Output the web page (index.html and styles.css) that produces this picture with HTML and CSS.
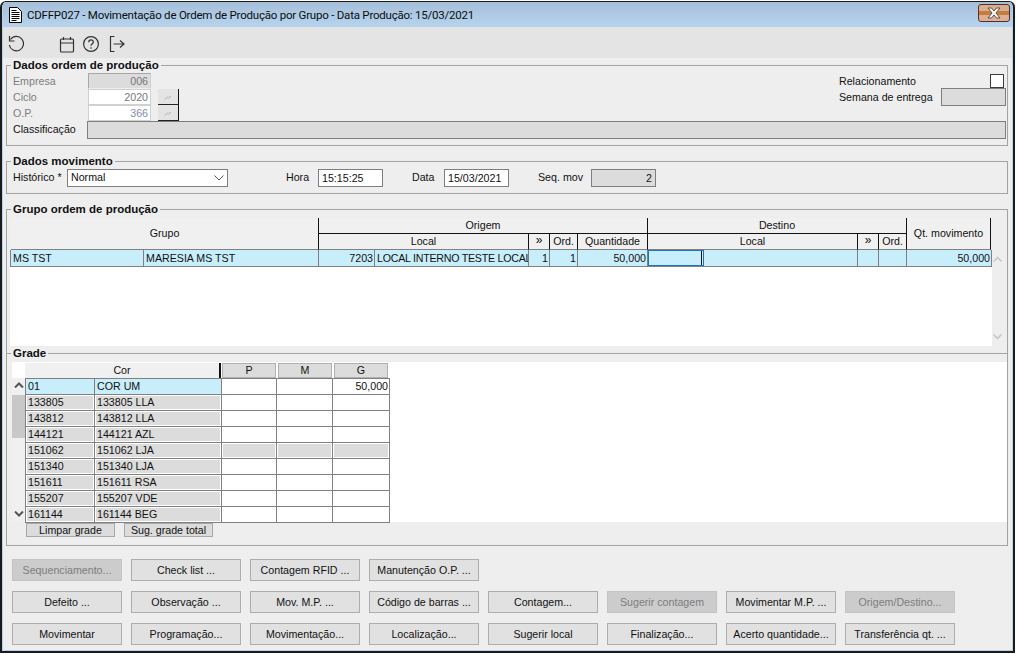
FILE: index.html
```html
<!DOCTYPE html>
<html lang="pt-BR">
<head>
<meta charset="utf-8">
<title>CDFFP027</title>
<link rel="stylesheet" href="styles.css">
</head>
<body>
<div class="window">
  <header class="titlebar">
    <svg class="doc-icon" width="15" height="16" viewBox="0 0 15 16"><path d="M1.500.5h8l4 4v11h-12z" fill="#fff" stroke="#000"/><path d="M3.500 3.500h5M3.500 5.500h8M3.500 7.500h8M3.500 9.500h8M3.500 11.500h8M3.500 13.500h5" stroke="#000"/></svg>
    <span class="title">CDFFP027 - Movimentação de Ordem de Produção por Grupo - Data Produção: 15/03/2021</span>
    <div class="close"><svg width="16" height="12" viewBox="0 0 16 12"><path d="M2 1h3.500L8 4l2.500-3H14L10 6l4 5h-3.500L8 8l-2.500 3H2l4-5z" fill="#f4f4f4" stroke="#5e5048"/></svg></div>
  </header>
  <nav class="toolbar">
    <svg class="tool undo" width="20" height="20" viewBox="0 0 20 20" fill="none" stroke="#333" stroke-width="1.200"><path d="M4.500 5.500A7.200 7.200 0 1 1 3.300 11"/><path d="M3.500 2v5h5"/></svg>
    <svg class="tool cal" width="16" height="18" viewBox="0 0 16 18" fill="none" stroke="#333" stroke-width="1.200"><rect x="1.500" y="4" width="13" height="13" rx="1"/><path d="M1.500 8h13M4.500 2v3M11.500 2v3"/></svg>
    <svg class="tool help" width="18" height="18" viewBox="0 0 18 18" fill="none" stroke="#333" stroke-width="1.200"><circle cx="9" cy="9" r="7.400"/><path d="M6.700 7.200c0-3 4.700-3 4.700-.2 0 1.800-2.400 1.800-2.400 3.700"/><path d="M9 12.300v1.400"/></svg>
    <svg class="tool exit" width="18" height="18" viewBox="0 0 18 18" fill="none" stroke="#333" stroke-width="1.200"><path d="M6.500 1.500h-4v15h4M5.500 9h10.500M12 5.500 16 9l-4 3.500"/></svg>
  </nav>
  <main class="content">
    <fieldset class="group">
      <legend>Dados ordem de produção</legend>
      <div class="op-top">
        <div class="op-left">
          <div class="frow"><span class="flabel off">Empresa</span><div class="cell-in locked">006</div></div>
          <div class="frow"><span class="flabel off">Ciclo</span><div class="cell-in">2020</div><div class="lookup"><svg width="10" height="8" viewBox="0 0 10 8"><path d="M2 6.500l3-3M5.500 5.500 8 3" stroke="#aaa"/></svg></div></div>
          <div class="frow"><span class="flabel off">O.P.</span><div class="cell-in blue">366</div><div class="lookup"><svg width="10" height="8" viewBox="0 0 10 8"><path d="M2 6.500l3-3M5.500 5.500 8 3" stroke="#aaa"/></svg></div></div>
        </div>
        <div class="op-right">
          <div class="rrow first"><span>Relacionamento</span><span class="check"></span></div>
          <div class="rrow"><span>Semana de entrega</span><div class="box-gray wide"></div></div>
        </div>
      </div>
      <div class="class-row"><span class="flabel">Classificação</span><div class="box-gray fill"></div></div>
    </fieldset>

    <fieldset class="group move">
      <legend>Dados movimento</legend>
      <div class="move-row">
        <span class="m-hist">Histórico *</span>
        <div class="box select"><span>Normal</span><svg width="10" height="6" viewBox="0 0 10 6" fill="none" stroke="#555"><path d="M.5.500 5 5l4.500-4.500"/></svg></div>
        <span class="m-hora">Hora</span><div class="box time">15:15:25</div>
        <span class="m-data">Data</span><div class="box time">15/03/2021</div>
        <span class="m-seq">Seq. mov</span><div class="box-gray seq">2</div>
      </div>
    </fieldset>

    <fieldset class="group grp">
      <legend>Grupo ordem de produção</legend>
      <div class="grid-wrap">
        <div class="grid-main">
          <div class="ghead">
            <div class="gh g-grupo">Grupo</div>
            <div class="gh g-origem">Origem</div>
            <div class="gh g-destino">Destino</div>
            <div class="gh g-qt">Qt. movimento</div>
            <div class="gh low">Local</div>
            <div class="gh low chev">»</div>
            <div class="gh low">Ord.</div>
            <div class="gh low">Quantidade</div>
            <div class="gh low">Local</div>
            <div class="gh low chev">»</div>
            <div class="gh low">Ord.</div>
          </div>
          <div class="grow">
            <div class="gc">MS TST</div>
            <div class="gc">MARESIA MS TST</div>
            <div class="gc right">7203</div>
            <div class="gc tight">LOCAL INTERNO TESTE LOCAL</div>
            <div class="gc right">1</div>
            <div class="gc right">1</div>
            <div class="gc right">50,000</div>
            <div class="gc focus"></div>
            <div class="gc"></div>
            <div class="gc"></div>
            <div class="gc"></div>
            <div class="gc right">50,000</div>
          </div>
          <div class="gblank"></div>
        </div>
        <div class="vscroll">
          <svg width="9" height="6" viewBox="0 0 9 6" fill="none" stroke="#c4c4c4" stroke-width="1.500"><path d="M.5 5.500l4-4 4 4"/></svg>
          <svg width="9" height="6" viewBox="0 0 9 6" fill="none" stroke="#c4c4c4" stroke-width="1.500"><path d="M.5.500l4 4 4-4"/></svg>
        </div>
      </div>

      <fieldset class="sub">
        <legend>Grade</legend>
        <div class="grade-panel">
          <div class="gscroll">
            <svg class="up" width="10" height="6" viewBox="0 0 10 6" fill="none" stroke="#555" stroke-width="2"><path d="M1 5.500l4-4 4 4"/></svg>
            <div class="thumb"></div>
            <svg class="down" width="10" height="6" viewBox="0 0 10 6" fill="none" stroke="#555" stroke-width="2"><path d="M1 .5l4 4 4-4"/></svg>
          </div>
          <div class="gtable">
            <div class="thead">
              <div class="th-cor">Cor</div>
              <div class="th-size w-p">P</div>
              <div class="th-size w-m">M</div>
              <div class="th-size w-g">G</div>
            </div>
            <div class="tbody">
              <div class="tc sel">01</div><div class="tc sel">COR UM</div><div class="tc"></div><div class="tc"></div><div class="tc right">50,000</div>
              <div class="tc gray">133805</div><div class="tc gray">133805 LLA</div><div class="tc"></div><div class="tc"></div><div class="tc"></div>
              <div class="tc gray">143812</div><div class="tc gray">143812 LLA</div><div class="tc"></div><div class="tc"></div><div class="tc"></div>
              <div class="tc gray">144121</div><div class="tc gray">144121 AZL</div><div class="tc"></div><div class="tc"></div><div class="tc"></div>
              <div class="tc gray">151062</div><div class="tc gray">151062 LJA</div><div class="tc gray"></div><div class="tc gray"></div><div class="tc gray"></div>
              <div class="tc gray">151340</div><div class="tc gray">151340 LJA</div><div class="tc"></div><div class="tc"></div><div class="tc"></div>
              <div class="tc gray">151611</div><div class="tc gray">151611 RSA</div><div class="tc"></div><div class="tc"></div><div class="tc"></div>
              <div class="tc gray">155207</div><div class="tc gray">155207 VDE</div><div class="tc"></div><div class="tc"></div><div class="tc"></div>
              <div class="tc gray">161144</div><div class="tc gray">161144 BEG</div><div class="tc"></div><div class="tc"></div><div class="tc"></div>
            </div>
          </div>
        </div>
        <div class="grade-actions">
          <div class="mini">Limpar grade</div>
          <div class="mini">Sug. grade total</div>
        </div>
      </fieldset>
    </fieldset>

    <div class="actions">
      <div class="btn off">Sequenciamento...</div>
      <div class="btn">Check list ...</div>
      <div class="btn">Contagem RFID ...</div>
      <div class="btn">Manutenção O.P. ...</div>
      <div class="btn hole"></div><div class="btn hole"></div><div class="btn hole"></div><div class="btn hole"></div>
      <div class="btn">Defeito ...</div>
      <div class="btn">Observação ...</div>
      <div class="btn">Mov. M.P. ...</div>
      <div class="btn">Código de barras ...</div>
      <div class="btn">Contagem...</div>
      <div class="btn off">Sugerir contagem</div>
      <div class="btn">Movimentar M.P. ...</div>
      <div class="btn off">Origem/Destino...</div>
      <div class="btn">Movimentar</div>
      <div class="btn">Programação...</div>
      <div class="btn">Movimentação...</div>
      <div class="btn">Localização...</div>
      <div class="btn">Sugerir local</div>
      <div class="btn">Finalização...</div>
      <div class="btn">Acerto quantidade...</div>
      <div class="btn">Transferência qt. ...</div>
    </div>
  </main>
</div>
</body>
</html>
```

FILE: styles.css
```css
* { box-sizing: border-box; }
html, body { margin: 0; padding: 0; background: #fff; }
body {
  width: 1017px;
  height: 654px;
  overflow: hidden;
  font: 8pt/14px "Liberation Sans", Arial, sans-serif;
  color: #111;
}
.window {
  width: 1015px;
  height: 652px;
  margin-top: 1px;
  border: 2px solid #1a1a1a;
  border-top-width: 1px;
  border-radius: 6px 6px 0 0;
  background: #b4d3ee;
  padding: 0 1px 1px;
  display: flex;
  flex-direction: column;
  overflow: hidden;
}

/* title bar */
.titlebar {
  height: 25px;
  flex: none;
  display: flex;
  align-items: center;
  padding: 0 2px 0 5px;
  background: linear-gradient(#a6bfd9, #b6d4ef);
}
.doc-icon { flex: none; margin-right: 4px; }
.title {
  flex: 1;
  font: 11.5px/16px Roboto, sans-serif;
  letter-spacing: -0.22px;
  color: #0c0c0c;
  white-space: nowrap;
}
.close {
  flex: none;
  width: 32px;
  height: 18px;
  margin-bottom: 3px;
  border: 1px solid #5a2b33;
  border-radius: 3px;
  display: flex;
  align-items: center;
  justify-content: center;
  background: linear-gradient(#d8ae8c 0 35%, #c57c3c 35% 62%, #dcb090 62% 100%);
}

/* tool bar */
.toolbar {
  height: 31px;
  flex: none;
  background: #e4e4e4;
  display: flex;
  align-items: center;
  padding-top: 2px;
}
.tool { flex: none; }
.undo { margin-left: 3px; }
.cal { margin-left: 33px; }
.help { margin-left: 7px; }
.exit { margin-left: 8px; }

/* content */
.content {
  flex: 1;
  background: #eeeeee;
  padding: 0 3px;
  min-height: 0;
}
fieldset {
  margin: 0;
  min-width: 0;
  border: 1px solid #a3a3a3;
  padding: 0;
}
legend {
  margin-left: 4px;
  padding: 0 2px;
  font: bold 11.5px/14px "Liberation Sans", Arial, sans-serif;
  color: #111;
}
.group { width: 1002px; }

/* dados ordem */
.op-top { display: flex; justify-content: space-between; padding: 1px 1px 0 0; }
.frow { display: flex; align-items: center; height: 16px; }
.flabel { width: 81px; padding-left: 6px; flex: none; }
.off { color: #7d7d7d; }
.cell-in {
  width: 63px;
  height: 16px;
  border: 1px solid #d0d0d0;
  background: #fff;
  color: #777;
  text-align: right;
  padding-right: 2px;
  line-height: 15px;
}
.cell-in.locked { background: #dcdcdc; border-top-color: #a8a8a8; border-left-color: #a8a8a8; border-bottom-color: #eee; }
.cell-in.blue { color: #7f8ea6; }
.lookup {
  width: 21px;
  height: 16px;
  margin-left: 7px;
  background: #e4e4e4;
  border-right: 1px solid #111;
  border-bottom: 1px solid #222;
  display: flex;
  align-items: center;
  justify-content: center;
}
.op-right { width: 167px; }
.rrow { display: flex; justify-content: space-between; align-items: center; height: 16px; }
.rrow.first { padding-right: 2px; }
.check { width: 14px; height: 14px; border: 1px solid #3c3c3c; background: #fff; }
.box-gray {
  height: 18px;
  background: #dcdcdc;
  border: 1px solid #7e7e7e;
  text-align: right;
  padding-right: 3px;
  line-height: 16px;
}
.wide { width: 65px; flex: none; }
.class-row { display: flex; align-items: center; height: 18px; padding-right: 1px; margin-bottom: 6px; }
.class-row .flabel { width: 80px; margin-top: -2px; }
.fill { flex: 1; }

/* dados movimento */
.move { margin-top: 8px; }
.move-row { display: flex; align-items: center; height: 18px; margin: 1px 0 6px; padding-left: 6px; }
.move-row > span { margin-top: -2px; }
.m-hist { width: 54px; flex: none; }
.box { height: 18px; border: 1px solid #7e7e7e; background: #fff; line-height: 16px; padding-left: 3px; }
.select { width: 161px; display: flex; align-items: center; justify-content: space-between; padding-right: 3px; }
.select span { margin-top: -2px; }
.time { width: 65px; color: #111; }
.m-hora { margin-left: 58px; width: 32px; }
.m-data { margin-left: 29px; width: 32px; }
.m-seq { margin-left: 29px; width: 53px; }
.seq { width: 65px; }

/* grupo */
.grp { margin-top: 8px; height: 344px; }
.grid-wrap { display: flex; padding: 2px 0 0 3px; height: 130px; }
.grid-main { width: 982px; flex: none; display: flex; flex-direction: column; }
.ghead {
  margin-left: 1px;
  display: grid;
  grid-template-columns: 308px 210px 21px 28px 70px 210px 21px 28px 84px;
  grid-template-rows: 16px 16px;
  background: #f0f0f0;
  width: 980px;
}
.gh {
  text-align: center;
  line-height: 15px;
  border-right: 1px solid #111;
  border-bottom: 1px solid #111;
}
.gh.low { grid-row: 2; border-bottom-color: #808080; }
.gh.chev { font-size: 12px; line-height: 13px; }
.g-grupo { grid-column: 1; grid-row: 1 / 3; line-height: 30px; border-bottom-color: #808080; }
.g-origem { grid-column: 2 / 6; grid-row: 1; }
.g-destino { grid-column: 6 / 9; grid-row: 1; }
.g-qt { grid-column: 9; grid-row: 1 / 3; line-height: 30px; border-bottom-color: #808080; }
.grow {
  display: grid;
  grid-template-columns: 133px 175px 56px 154px 21px 28px 70px 56px 154px 21px 28px 85px;
  height: 17px;
  border-left: 1px solid #808080;
  border-bottom: 1px solid #808080;
  background: #c8eefb;
  flex: none;
}
.gc {
  border-right: 1px solid #808080;
  padding: 0 2px;
  line-height: 16px;
  overflow: hidden;
  white-space: nowrap;
}
.gc.tight { letter-spacing: -0.25px; padding-right: 0; }
.right { text-align: right; padding-right: 1px; }
.focus {
  border: 1px solid #1c74c4;
  box-shadow: inset -1px 0 0 #c8eefb, inset -2px 0 0 #111;
}
.gblank { flex: 1; background: #fff; }
.vscroll {
  width: 13px;
  padding: 6px 3px 6px 0;
  margin-top: 32px;
  display: flex;
  flex-direction: column;
  justify-content: space-between;
  align-items: center;
}

/* grade */
.sub { border-width: 1px 0 0; }
.grade-panel { display: flex; margin: 2px 0 0 5px; width: 995px; height: 160px; background: #fff; }
.gscroll {
  width: 13px;
  margin-top: 16px;
  flex: none;
  background: #f0f0f0;
  display: flex;
  flex-direction: column;
  align-items: center;
  padding-top: 4px;
}
.thumb { width: 100%; height: 43px; margin-top: 7px; background: #c8c8c8; }
.gscroll .down { margin-top: auto; margin-bottom: 5px; }
.gtable { width: 365px; }
.thead { display: flex; height: 15px; margin-top: 1px; }
.th-cor {
  width: 196px;
  background: #f0f0f0;
  border-right: 2px solid #111;
  text-align: center;
  line-height: 15px;
}
.th-size {
  background: #dcdcdc;
  border: 1px solid #b0b0b0;
  text-align: center;
  line-height: 13px;
}
.w-p { width: 54px; margin-left: 1px; }
.w-m { width: 54px; margin-left: 2px; }
.w-g { width: 54px; margin-left: 2px; }
.tbody {
  display: grid;
  grid-template-columns: 69px 127px 55px 56px 57px;
  grid-auto-rows: 16px;
  border-left: 1px solid #808080;
  border-top: 1px solid #808080;
  width: 365px;
}
.tc {
  border-right: 1px solid #808080;
  border-bottom: 1px solid #808080;
  padding: 0 2px;
  line-height: 15px;
  white-space: nowrap;
}
.tc.right { padding-right: 1px; }
.tc.sel { background: #c8eefb; }
.tc.gray { background: #dcdcdc; box-shadow: inset 0 0 0 1px #fff; }
.grade-actions { display: flex; gap: 9px; margin: 1px 0 0 19px; }
.mini {
  width: 89px;
  height: 14px;
  background: #dcdcdc;
  border: 1px solid #a8a8a8;
  text-align: center;
  line-height: 13px;
}

/* buttons */
.actions {
  display: grid;
  grid-template-columns: repeat(8, 110px);
  grid-auto-rows: 22px;
  gap: 10px 9px;
  margin: 13px 0 0 6px;
}
.btn {
  background: #e1e1e1;
  border: 1px solid #adadad;
  text-align: center;
  line-height: 20px;
  white-space: nowrap;
}
.btn.off { background: #cccccc; border-color: #c4c4c4; color: #7d7d7d; }
.btn.hole { visibility: hidden; }
```
